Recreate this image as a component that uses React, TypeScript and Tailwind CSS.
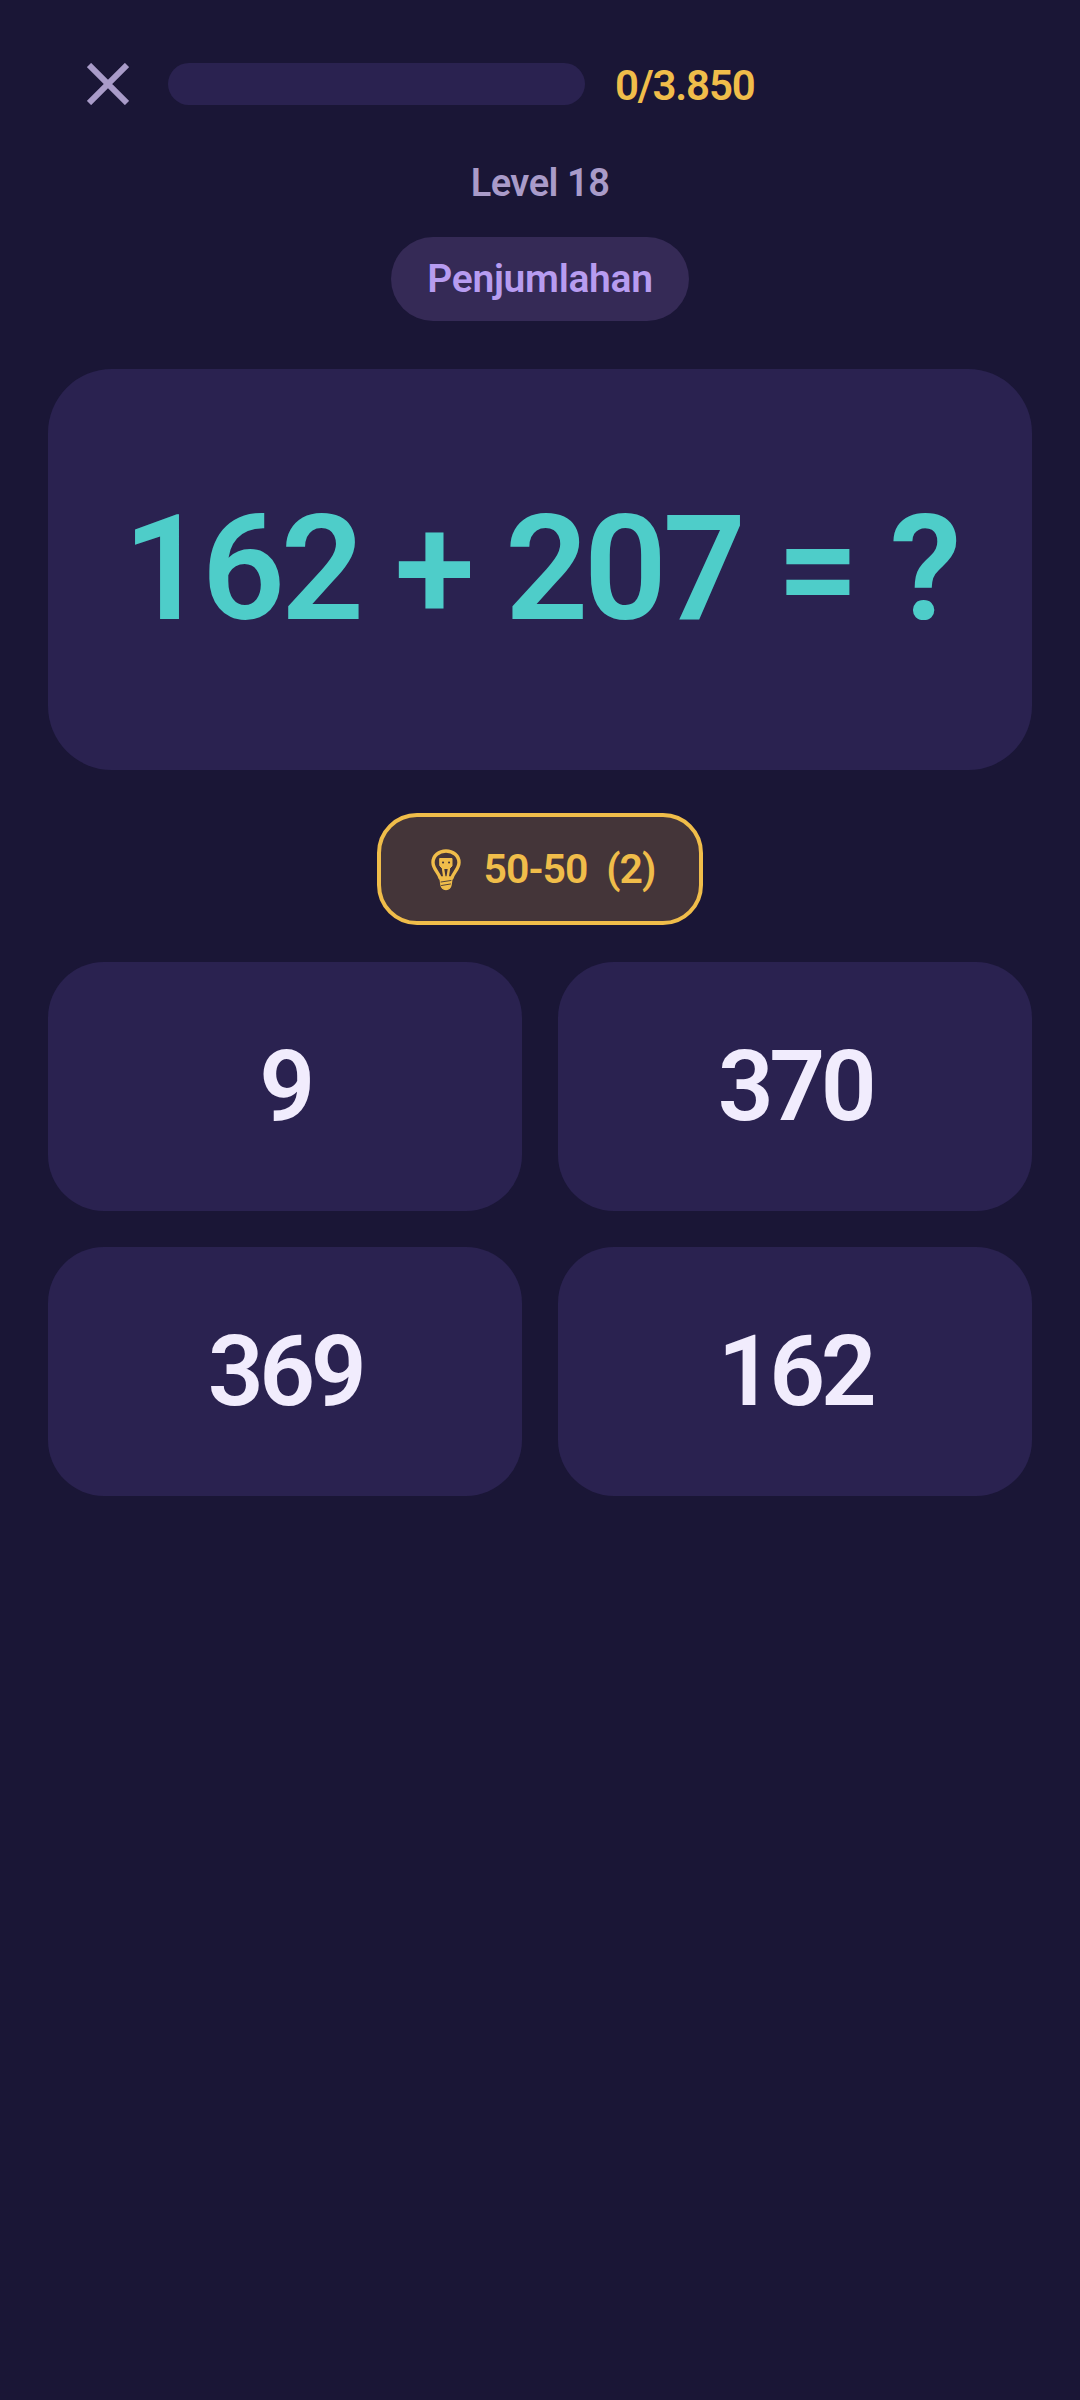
const ANSWERS = ['9', '370', '369', '162'];

function BulbIcon() {
  return (
    <svg width="30" height="42" viewBox="0 0 30 42" fill="none" stroke="#f0bd4a" strokeLinecap="round" strokeLinejoin="round">
      {/* glass */}
      <path d="M9 29C8 24 2 20 2 13.5C2 6.5 8 2 15 2C22 2 28 6.5 28 13.5C28 20 22 24 21 29Z" strokeWidth="3.4" />
      {/* filament */}
      <path d="M9 9.5H21V17L18.5 19.5H11.5L9 17Z" fill="#f0bd4a" strokeWidth="1" />
      <path d="M12 19.5L13.5 29M18 19.5L16.5 29" strokeWidth="2.4" />
      <path d="M12 13.5h.1M18 13.5h.1" stroke="#443539" strokeWidth="2" />
      {/* screw base */}
      <path d="M9 29L10 36C10.5 39 12.5 40.5 15 40.5C17.5 40.5 19.5 39 20 36L21 29Z" fill="#f0bd4a" strokeWidth="1.5" />
      <path d="M10 33L20 31.5M10.5 36.5L19.5 35" stroke="#443539" strokeWidth="0.9" />
    </svg>
  );
}

function CloseIcon() {
  return (
    <svg width="42" height="42" viewBox="0 0 42 42" stroke="#a99bc9" strokeWidth="6">
      <path d="M2 2L40 40M40 2L2 40" />
    </svg>
  );
}

export default function App() {
  return (
    <div className="min-h-[2400px] bg-[#1a1636] px-12 font-['Roboto',sans-serif]">
      {/* top bar */}
      <div className="flex items-center pt-[63px] pl-[39px]">
        <CloseIcon />
        <div className="ml-[39px] h-[42px] w-[417px] rounded-[21px] bg-[#2a2250]" />
        <span className="mt-[2px] -mb-[2px] ml-[30px] text-[42px] leading-[42px] font-semibold tracking-[-1.2px] text-[#f0bd4a]">0/3.850</span>
      </div>

      <div className="mt-[54px] text-center text-[38px] leading-[48px] font-semibold tracking-[-0.5px] text-[#a99bc9]">Level 18</div>

      <div className="mt-[30px] flex justify-center">
        <div className="flex h-[84px] w-[298px] items-center justify-center rounded-[42px] bg-[#352a56] text-[39px] font-semibold tracking-[-0.3px] text-[#b79cf0]">
          Penjumlahan
        </div>
      </div>

      {/* question */}
      <div className="mt-[48px] flex h-[401px] items-center justify-center rounded-[64px] bg-[#2a2250] text-[146px] font-semibold tracking-[-4.5px] [word-spacing:3px] whitespace-nowrap text-[#4ecdc9]">
        162 + 207 = ?
      </div>

      {/* hint */}
      <div className="mt-[43px] flex justify-center">
        <div className="flex h-[112px] w-[326px] items-center justify-center gap-[22px] rounded-[40px] border-4 border-[#f0bd4a] bg-[#443539] pt-[1px] pl-[7px] text-[41px] font-semibold tracking-[-0.9px] whitespace-pre text-[#f0bd4a]">
          <BulbIcon />
          <span>50-50  (2)</span>
        </div>
      </div>

      {/* answers */}
      <div className="mt-[37px] grid grid-cols-2 gap-[36px]">
        {ANSWERS.map((a) => (
          <div
            key={a}
            className="flex h-[249px] items-center justify-center rounded-[56px] bg-[#2a2250] text-[98px] font-semibold tracking-[-4.5px] text-[#f1ecfd]"
          >
            {a}
          </div>
        ))}
      </div>
    </div>
  );
}
